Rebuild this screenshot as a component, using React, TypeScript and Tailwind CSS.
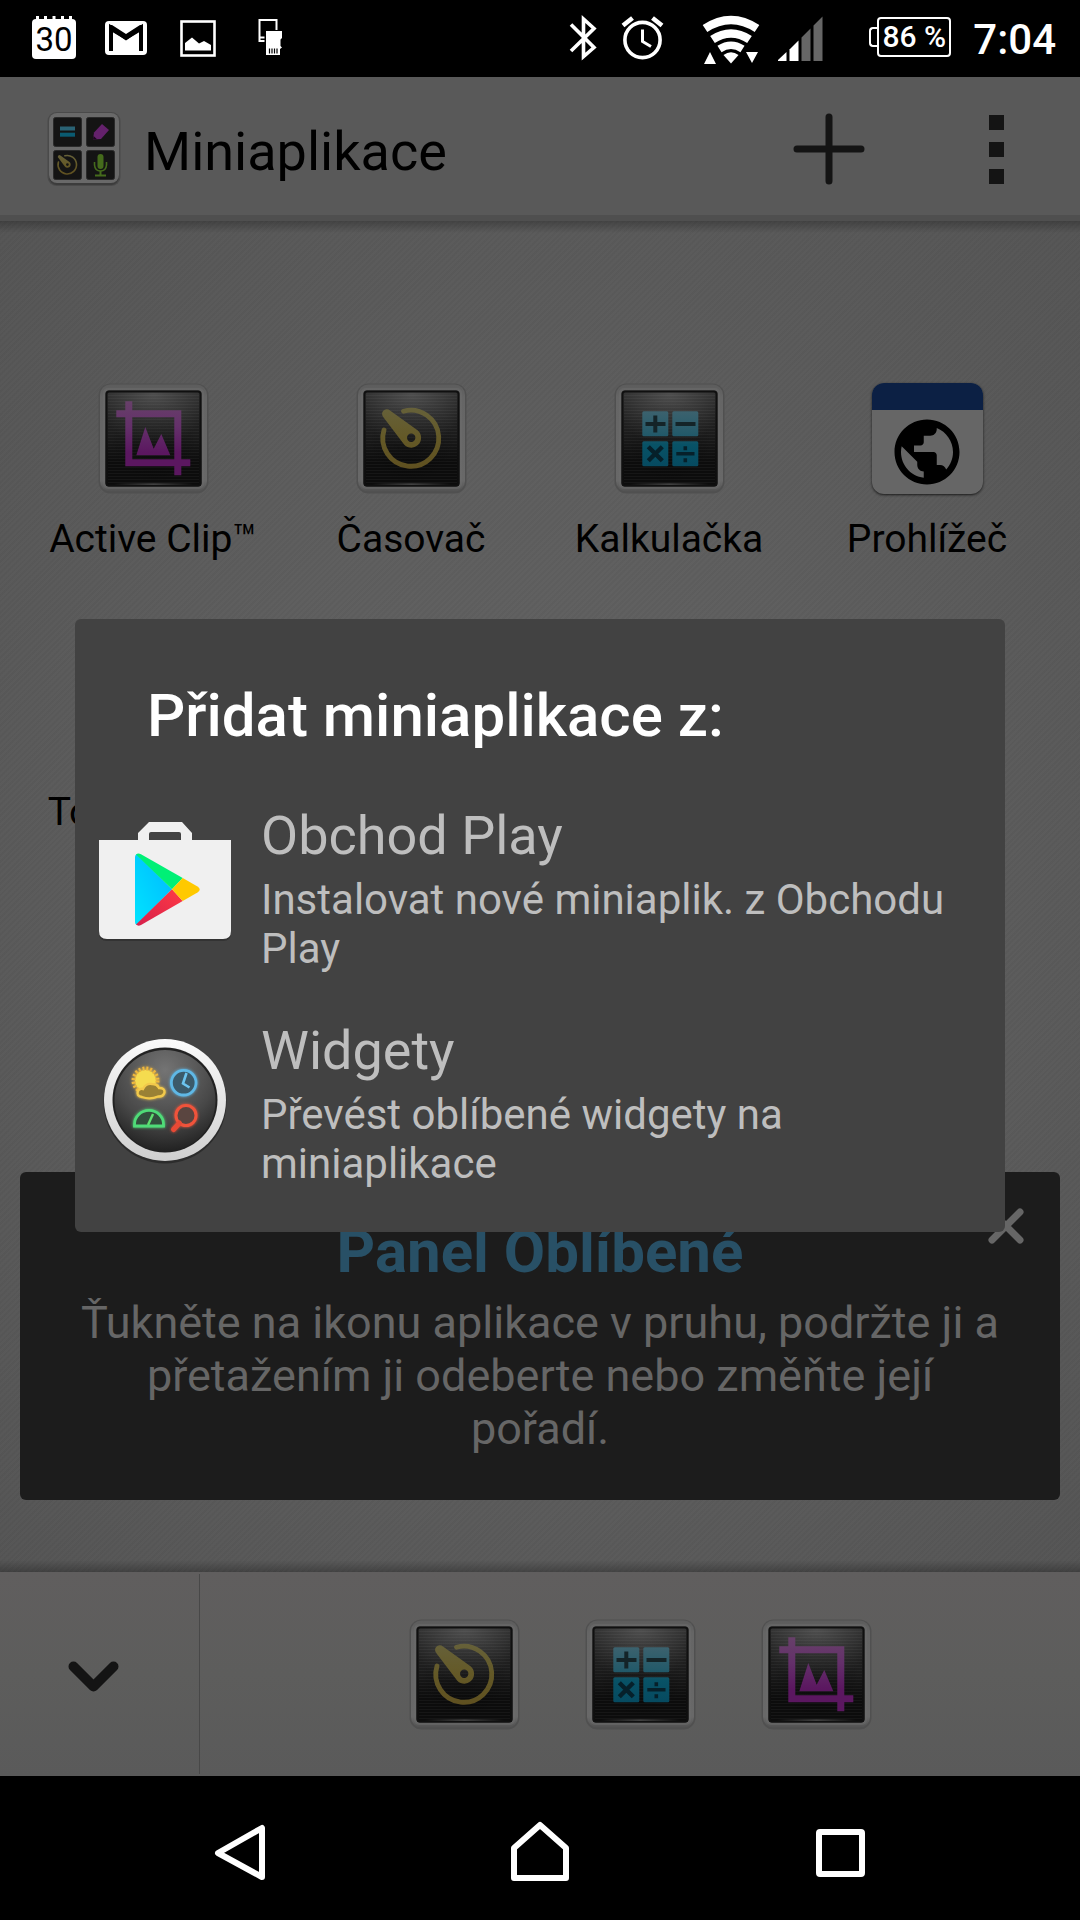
import type { ReactNode } from 'react';
import { MdPublic } from 'react-icons/md';

type AppName = 'clip' | 'timer' | 'calc';

const Gradients = () => (
  <svg className="absolute h-0 w-0" aria-hidden="true">
    <defs>
      <linearGradient id="shell" x1="0" y1="0" x2="0" y2="1">
        <stop offset="0" stopColor="#5c5c5c" />
        <stop offset="0.12" stopColor="#656565" />
        <stop offset="0.9" stopColor="#686868" />
        <stop offset="1" stopColor="#525252" />
      </linearGradient>
      <linearGradient id="glass" x1="0" y1="0" x2="0" y2="1">
        <stop offset="0" stopColor="#2e2e2e" />
        <stop offset="0.45" stopColor="#1c1c1c" />
        <stop offset="0.75" stopColor="#0c0c0c" />
        <stop offset="1" stopColor="#0c0c0c" />
      </linearGradient>
      <radialGradient id="shine" cx="0.5" cy="0" r="0.6">
        <stop offset="0" stopColor="#fff" stopOpacity="0.16" />
        <stop offset="1" stopColor="#fff" stopOpacity="0" />
      </radialGradient>
      <linearGradient id="bottomEdge" x1="0" y1="0" x2="1" y2="0">
        <stop offset="0" stopColor="#555" stopOpacity="0" />
        <stop offset="0.5" stopColor="#555" />
        <stop offset="1" stopColor="#555" stopOpacity="0" />
      </linearGradient>
      <pattern id="lines" width="4" height="3" patternUnits="userSpaceOnUse">
        <path d="M0 0.5H4" stroke="#fff" strokeOpacity="0.04" />
      </pattern>
      <linearGradient id="purple" gradientUnits="userSpaceOnUse" x1="0" y1="18" x2="0" y2="92">
        <stop offset="0" stopColor="#674069" />
        <stop offset="0.35" stopColor="#64306a" />
        <stop offset="0.7" stopColor="#5b1760" />
        <stop offset="1" stopColor="#5b1760" />
      </linearGradient>
      <linearGradient id="yellow" gradientUnits="userSpaceOnUse" x1="0" y1="24" x2="0" y2="86">
        <stop offset="0" stopColor="#66613a" />
        <stop offset="0.5" stopColor="#645927" />
        <stop offset="1" stopColor="#5f5020" />
      </linearGradient>
      <linearGradient id="cyan" gradientUnits="userSpaceOnUse" x1="0" y1="28" x2="0" y2="84">
        <stop offset="0" stopColor="#3c626e" />
        <stop offset="0.45" stopColor="#215969" />
        <stop offset="0.6" stopColor="#085266" />
        <stop offset="1" stopColor="#064a60" />
      </linearGradient>
      <radialGradient id="glow">
        <stop offset="0" stopColor="currentColor" stopOpacity="0.2" />
        <stop offset="1" stopColor="currentColor" stopOpacity="0" />
      </radialGradient>
    </defs>
  </svg>
);

const TimerGlyph = () => (
  <>
    <path d="M47.5 28.2A28 28 0 1 1 28 47" fill="none" stroke="url(#yellow)" strokeWidth="4.8" strokeLinecap="round" />
    <path
      fillRule="evenodd"
      fill="url(#yellow)"
      d="M27.6 34.4A4.6 4.6 0 0 1 34 27.4L61.5 47.3A9.8 9.8 0 1 1 46.8 59.8ZM55.2 50.6a4.2 4.2 0 1 0 0 8.4a4.2 4.2 0 1 0 0-8.4Z"
    />
  </>
);

const ClipGlyph = () => (
  <g fill="url(#purple)">
    <path
      fillRule="evenodd"
      d="M27.3 18.3h7v9h49v49h9v7h-9v9h-7v-9h-49v-49h-9v-7h9ZM34.3 34.3v42h42v-42Z"
    />
    <path d="M38.3 72.3L47.3 44L55.7 65.7L63.3 51L72.3 72.3Z" />
  </g>
);

const CalcGlyph = () => (
  <>
    <g fill="url(#cyan)">
      <rect x="28.3" y="28.3" width="26" height="25" rx="1.5" />
      <rect x="58.3" y="28.3" width="26" height="25" rx="1.5" />
      <rect x="28.3" y="58.3" width="26" height="25" rx="1.5" />
      <rect x="58.3" y="58.3" width="26" height="25" rx="1.5" />
    </g>
    <path d="M31.5 41H51.5M41.3 32.5V49.5M61.5 41H81.5" stroke="#142428" strokeWidth="4" />
    <path d="M34.3 63.8L48.3 77.8M48.3 63.8L34.3 77.8" stroke="#06202a" strokeWidth="4.4" />
    <path d="M62.3 70.8H80.5M71.3 63.3v4M71.3 75.2v4" stroke="#06202a" strokeWidth="3.6" />
  </>
);

const glyphs: Record<AppName, ReactNode> = {
  clip: <ClipGlyph />,
  timer: <TimerGlyph />,
  calc: <CalcGlyph />,
};

const glowColors: Record<AppName, string> = {
  clip: 'text-[#7a1a80]',
  timer: 'text-[#6b6010]',
  calc: 'text-[#107088]',
};

const AppTile = ({ name }: { name: AppName }) => (
  <svg viewBox="0 0 111 111" className={`size-[111px] ${glowColors[name]}`} aria-hidden="true">
    <rect x="0.5" y="0.5" width="110" height="110" rx="12" fill="#505050" />
    <rect x="2" y="1.5" width="107" height="107" rx="10.5" fill="url(#shell)" />
    <rect x="5" y="5" width="101" height="101" rx="5" fill="#6b6b6b" fillOpacity="0.5" />
    <rect x="7.5" y="7.5" width="96" height="96" rx="3.5" fill="url(#glass)" />
    <rect x="10" y="10" width="91" height="91" fill="url(#lines)" />
    <rect x="9" y="9" width="93" height="93" rx="2" fill="url(#shine)" />
    <circle cx="55.5" cy="60" r="44" fill="url(#glow)" />
    <rect x="8.5" y="8.5" width="94" height="94" rx="2.5" fill="none" stroke="#101010" strokeWidth="2" />
    <rect x="16" y="100.5" width="79" height="1.2" fill="url(#bottomEdge)" />
    {glyphs[name]}
  </svg>
);

const BrowserTile = () => (
  <div className="flex size-[111px] flex-col overflow-hidden rounded-xl bg-[#666666] shadow-sm shadow-black/60">
    <div className="h-[27px] bg-[#0c2044]" />
    <div className="flex flex-1 items-center justify-center">
      <MdPublic size={78} className="text-black" />
    </div>
  </div>
);

const SmallAppsIcon = () => (
  <svg viewBox="0 0 74 76" className="h-[76px] w-[74px]" aria-hidden="true">
    <rect x="0.500" y="1" width="73" height="74" rx="9" fill="#4a4a4a" />
    <rect x="2" y="3" width="70" height="71" rx="8" fill="#3c3c3c" />
    <rect x="2" y="2" width="70" height="70" rx="8" fill="#696969" />
    <g transform="translate(1 1)">
      <g fill="#141414" stroke="#2a2a2a">
        <rect x="5.500" y="5.500" width="28" height="29" rx="2" />
        <rect x="38.500" y="5.500" width="28" height="29" rx="2" />
        <rect x="5.500" y="38.500" width="28" height="29" rx="2" />
        <rect x="38.500" y="38.500" width="28" height="29" rx="2" />
      </g>
      <path d="M12 16.500H27" stroke="#2a6375" strokeWidth="4" />
      <path d="M12 22.700H27" stroke="#0a5a70" strokeWidth="4" />
      <path d="M45 27.500L46 20.500L54 12L61 18L53 27Z" fill="#64216c" />
      <path d="M45 27.500L45.600 24L49 27.200Z" fill="#1a081c" />
      <g transform="translate(1.200 34.500) scale(0.330)">
        <TimerGlyph />
      </g>
      <g stroke="#456b1c" fill="none">
        <path d="M52.500 45V54" strokeWidth="6" strokeLinecap="round" />
        <path d="M46.500 50V53Q47 59 52.500 59Q58 59 58.500 53V50" strokeWidth="1.600" />
        <path d="M52.500 59V63M47 63.500H58" strokeWidth="2" />
      </g>
    </g>
  </svg>
);

const StatusBar = () => (
  <div className="flex h-[77px] shrink-0 items-start justify-between bg-black pt-3 text-white">
    <div className="ml-[18px] flex">
      <svg viewBox="0 0 72 52" className="h-[52px] w-[72px]" role="img" aria-label="Kalendář">
        <rect x="14" y="7" width="44" height="40" rx="4" fill="#fff" />
        <path d="M19.500 4v5M27.500 4v5M36 4v5M44.500 4v5M52.500 4v5" stroke="#fff" strokeWidth="3" />
        <text x="36" y="39" textAnchor="middle" fontSize="33" fontFamily="Roboto, sans-serif" fill="#000">30</text>
      </svg>
      <svg viewBox="0 0 72 52" className="h-[52px] w-[72px]" role="img" aria-label="Gmail">
        <rect x="15" y="9" width="42" height="34" rx="4" fill="#fff" />
        <path d="M21 39V15.500L36 26L51 15.500V39" fill="none" stroke="#000" strokeWidth="4" />
        <path d="M19 13H22L36 22L50 13H53V18L36 28L19 18Z" fill="#000" />
      </svg>
      <svg viewBox="0 0 72 52" className="h-[52px] w-[72px]" aria-hidden="true">
        <rect x="19.500" y="9.500" width="33" height="34" fill="none" stroke="#fff" strokeWidth="2.600" />
        <path d="M23 38.500V31L30 25.500L37 31.500L42 29L49 33V38.500Z" fill="#fff" />
      </svg>
      <svg viewBox="0 0 72 52" className="h-[52px] w-[72px]" aria-hidden="true">
        <path d="M30.500 29H25.500V8H42.500V18" fill="none" stroke="#fff" strokeWidth="2" />
        <path d="M26 25.500H30.500" stroke="#fff" strokeWidth="2" />
        <path d="M32 19H48V26L46.500 27.500V34L48 35.500L46 37V43H32Z" fill="#fff" />
        <path d="M35.500 36.500v5M38 36.500v5M40.500 36.500v5M43 36.500v5" stroke="#000" strokeWidth="1.200" />
      </svg>
    </div>
    <div className="mr-6 flex">
      <svg viewBox="0 0 60 52" className="h-[52px] w-[60px]" role="img" aria-label="Bluetooth">
        <path d="M17 12.500L40 35.500L29.500 44.500V7L40 16.500L17 39" fill="none" stroke="#fff" strokeWidth="3.600" />
      </svg>
      <svg viewBox="0 0 60 52" className="h-[52px] w-[60px]" role="img" aria-label="Budík">
        <circle cx="28.500" cy="28" r="17.600" fill="none" stroke="#fff" strokeWidth="3.600" />
        <path d="M28.500 17.500V29.500L37 34.500" fill="none" stroke="#fff" strokeWidth="3" />
        <path d="M9 13.500L18.500 6M48 13.500L38.500 6" stroke="#fff" strokeWidth="4.600" />
      </svg>
      <svg viewBox="0 0 60 52" className="ml-7 h-[52px] w-[60px]" role="img" aria-label="Wi-Fi">
        <g fill="none" stroke="#fff" strokeWidth="8.500">
          <path d="M3 16.500Q29 -0.500 55 16.500" />
          <path d="M10.500 27.500Q29 15.500 47.500 27.500" />
          <path d="M17.500 37Q29 29.500 40.500 37" strokeWidth="7.500" />
        </g>
        <path d="M21.500 43Q29 37.500 36.500 43L29 51.500Z" fill="#fff" />
        <path d="M2 52L8 40L14 52ZM44 40H56L50 51Z" fill="#fff" />
      </svg>
      <svg viewBox="0 0 46 52" className="ml-4 h-[52px] w-[46px]" role="img" aria-label="Signál">
        <path d="M-1 49L8.500 40V49Z" fill="#fff" />
        <path d="M11.500 49V37.500L20.500 28.500V49Z" fill="#fff" />
        <path d="M23.500 49V25.500L32.500 16.500V49ZM35.500 49V13.500L44.500 4.500V49Z" fill="#666" />
      </svg>
      <div className="ml-[45px] flex h-[50px] items-center">
        <div className="h-5 w-2 rounded-l-sm border-2 border-r-0 border-white" />
        <div className="flex h-10 w-[74px] items-center justify-center rounded-sm border-2 border-white text-[30px] leading-none font-medium whitespace-nowrap">
          86&nbsp;%
        </div>
      </div>
      <div className="ml-[22px] h-[52px] text-[42px] leading-[56px] font-medium">7:04</div>
    </div>
  </div>
);

const Header = () => (
  <header className="flex h-36 shrink-0 items-center border-b-[6px] border-[#4f4f4f] bg-[#595959] pt-[6px] pl-[47px]">
    <SmallAppsIcon />
    <h1 className="ml-[23px] flex-1 pt-[5px] text-[54px] leading-[64px] text-black">Miniaplikace</h1>
    <button type="button" aria-label="Přidat" className="flex h-24 w-[168px] items-center justify-center">
      <svg viewBox="0 0 72 72" className="size-[72px]" aria-hidden="true">
        <path d="M36 4V68M4 36H68" stroke="#141414" strokeWidth="7" strokeLinecap="round" />
      </svg>
    </button>
    <button type="button" aria-label="Další možnosti" className="flex h-24 w-[167px] flex-col items-center justify-center gap-3">
      <span className="size-[15px] bg-[#141414]" />
      <span className="size-[15px] bg-[#141414]" />
      <span className="size-[15px] bg-[#141414]" />
    </button>
  </header>
);

const GridItem = ({ label, children }: { label: string; children: ReactNode }) => (
  <button type="button" className="flex flex-col items-center gap-[22px]">
    {children}
    <span className="text-[39px] leading-[46px] whitespace-nowrap text-black">{label}</span>
  </button>
);

const FavoritesPanel = () => (
  <section className="relative mx-5 mt-auto mb-[72px] rounded-md bg-[#1c1c1c] px-[60px] pt-[45px] pb-[45px] text-center">
    <h2 className="text-[60px] leading-[70px] font-bold text-[#285066]">Panel Oblíbené</h2>
    <p className="mt-[9px] text-[45px] leading-[53px] text-[#666666]">
      Ťukněte na ikonu aplikace v pruhu, podržte ji a přetažením ji odeberte nebo změňte její pořadí.
    </p>
    <button type="button" aria-label="Zavřít" className="absolute top-[35px] right-[35px]">
      <svg viewBox="0 0 38 38" className="size-[38px]" aria-hidden="true">
        <path d="M5 5L33 33M33 5L5 33" stroke="#666" strokeWidth="7" strokeLinecap="round" />
      </svg>
    </button>
  </section>
);

const Dock = () => (
  <footer className="flex h-[204px] shrink-0 bg-linear-to-b from-[#605e5e] via-[#5d5d5c] to-[#5a5a5a]">
    <div className="my-0.5 flex w-[200px] items-center border-r border-[#484848] pt-1 pl-[67px]">
      <button type="button" aria-label="Skrýt">
        <svg viewBox="0 0 53 33" className="h-[33px] w-[53px]" aria-hidden="true">
          <path d="M6.500 6.500L26.500 26.500L46.500 6.500" fill="none" stroke="#141414" strokeWidth="10" strokeLinecap="round" strokeLinejoin="round" />
        </svg>
      </button>
    </div>
    <div className="flex flex-1 items-center justify-center gap-[65px]">
      <button type="button" aria-label="Časovač"><AppTile name="timer" /></button>
      <button type="button" aria-label="Kalkulačka"><AppTile name="calc" /></button>
      <button type="button" aria-label="Active Clip"><AppTile name="clip" /></button>
    </div>
  </footer>
);

const PlayStoreIcon = () => (
  <svg viewBox="0 0 144 144" className="size-36 shrink-0" aria-hidden="true">
    <defs>
      <linearGradient id="playBlue" x1="1" y1="0" x2="0" y2="1">
        <stop offset="0" stopColor="#00b8ff" />
        <stop offset="1" stopColor="#00e4ff" />
      </linearGradient>
      <linearGradient id="playRed" x1="1" y1="0" x2="0" y2="1">
        <stop offset="0" stopColor="#ff3a44" />
        <stop offset="1" stopColor="#d6204c" />
      </linearGradient>
    </defs>
    <path d="M6 26H138V116Q138 124 130 124H14Q6 124 6 116Z" fill="#333" />
    <path
      fillRule="evenodd"
      fill="#f0f0f0"
      d="M6 23H45V16L56 5H89L99 16V23H138V114Q138 122 130 122H14Q6 122 6 114ZM58 15Q56 15 56 17V23H88V17Q88 15 86 15Z"
    />
    <g transform="translate(0 -1)">
      <path d="M42 41Q42 39.500 43.500 38L79 73.300L43.500 109Q42 108 42 106Z" fill="url(#playBlue)" />
      <path d="M43 38.500Q45 36.500 48 38.200L89.700 62L79 73.300Z" fill="#00f076" />
      <path d="M43 108.500Q45 110.500 48 109L89.700 85L79 73.300Z" fill="url(#playRed)" />
      <path d="M89.700 62L104.500 70.500Q109 73.300 104.500 76.500L89.700 85L79 73.300Z" fill="#ffc900" />
    </g>
  </svg>
);

const WidgetsIcon = () => (
  <svg viewBox="0 0 144 144" className="size-36 shrink-0" aria-hidden="true">
    <defs>
      <linearGradient id="ring" x1="0" y1="0" x2="0" y2="1">
        <stop offset="0" stopColor="#fafafa" />
        <stop offset="1" stopColor="#cfcfcf" />
      </linearGradient>
      <radialGradient id="disc" cx="0.5" cy="0.2" r="0.85">
        <stop offset="0" stopColor="#747474" />
        <stop offset="0.6" stopColor="#484848" />
        <stop offset="1" stopColor="#1c1c1c" />
      </radialGradient>
      <filter id="neon" x="-20%" y="-20%" width="140%" height="140%">
        <feGaussianBlur stdDeviation="1.8" result="halo" />
        <feMerge>
          <feMergeNode in="halo" />
          <feMergeNode in="SourceGraphic" />
        </feMerge>
      </filter>
    </defs>
    <circle cx="72" cy="70" r="61.500" fill="#2c2c2c" />
    <circle cx="72" cy="68" r="61" fill="url(#ring)" />
    <circle cx="72" cy="68" r="52.500" fill="#222" />
    <circle cx="72" cy="68.500" r="50.500" fill="url(#disc)" />
    <g filter="url(#neon)" transform="translate(0 -1)">
      <circle cx="52.500" cy="49.500" r="10.500" fill="#f5dc50" />
      <circle cx="52.500" cy="49.500" r="12" fill="none" stroke="#f0b83c" strokeWidth="4" strokeDasharray="1.900 1.900" />
      <path
        d="M49 66Q43 65 45 60Q46.500 57 50 58Q53 52 59 53Q64 53 66 57Q72 57 71.500 61.500Q70 66 65 65.500Q57 69 49 66Z"
        fill="#9a8134"
        stroke="#f2c94c"
        strokeWidth="2.400"
      />
      <circle cx="90.700" cy="51.700" r="12.300" fill="#3a5a6a" stroke="#5fb8e6" strokeWidth="2.800" />
      <path d="M93.500 42L90 52.500L96.500 56.500" fill="none" stroke="#6cc4f0" strokeWidth="2.600" />
      <path d="M41.500 95V93.500A14.400 14 0 0 1 70.500 93.500V95Z" fill="#33503c" stroke="#4fdc78" strokeWidth="2.800" />
      <path d="M55 94L60 83" stroke="#5fe070" strokeWidth="2.400" />
      <circle cx="93" cy="84.500" r="10" fill="#5a4440" stroke="#f0533a" strokeWidth="3" />
      <path d="M86.500 92L80.500 98.500" stroke="#e84a34" strokeWidth="5" strokeLinecap="round" />
    </g>
  </svg>
);

const sources = [
  { title: 'Obchod Play', text: 'Instalovat nové miniaplik. z Obchodu Play', icon: <PlayStoreIcon /> },
  { title: 'Widgety', text: 'Převést oblíbené widgety na miniaplikace', icon: <WidgetsIcon /> },
];

const AddDialog = () => (
  <div className="absolute inset-0 flex items-center justify-center px-[75px] pb-0.5">
    <div role="dialog" aria-labelledby="add-title" className="w-full rounded-md bg-[#424242] pt-[62px] pb-[21px]">
      <h2 id="add-title" className="mb-[30px] pl-[72px] text-[60px] leading-[70px] font-medium text-white">
        Přidat miniaplikace z:
      </h2>
      {sources.map((source) => (
        <button key={source.title} type="button" className="flex w-full items-center gap-6 py-[23px] pr-6 pl-[18px] text-left">
          {source.icon}
          <span className="flex flex-1 flex-col gap-2 text-[#bebebe]">
            <span className="text-[54px] leading-[63px]">{source.title}</span>
            <span className="text-[42px] leading-[49px]">{source.text}</span>
          </span>
        </button>
      ))}
    </div>
  </div>
);

const NavBar = () => (
  <nav className="flex h-36 shrink-0 items-center justify-center bg-black px-[90px]">
    <button type="button" aria-label="Zpět" className="flex flex-1 justify-center">
      <svg viewBox="0 0 60 72" className="h-[72px] w-[60px]" aria-hidden="true">
        <path d="M8 41L52 16V65Z" fill="none" stroke="#fff" strokeWidth="6" strokeLinejoin="round" />
      </svg>
    </button>
    <button type="button" aria-label="Domů" className="flex flex-1 justify-center">
      <svg viewBox="0 0 60 72" className="h-[72px] w-[60px]" aria-hidden="true">
        <path d="M4 66V36L30 13L56 36V66Z" fill="none" stroke="#fff" strokeWidth="6" strokeLinejoin="round" />
      </svg>
    </button>
    <button type="button" aria-label="Přehled" className="flex flex-1 justify-center">
      <svg viewBox="0 0 60 72" className="h-[72px] w-[60px]" aria-hidden="true">
        <rect x="9" y="20" width="43" height="42" rx="1" fill="none" stroke="#fff" strokeWidth="6" />
      </svg>
    </button>
  </nav>
);

export default function App() {
  return (
    <div className="flex min-h-screen flex-col bg-black font-[Roboto,sans-serif]">
      <Gradients />
      <StatusBar />
      <div className="relative flex flex-1 flex-col">
        <Header />
        <main className="relative flex flex-1 flex-col bg-[repeating-linear-gradient(135deg,rgba(0,0,0,0.03)_0px,rgba(0,0,0,0.03)_2px,transparent_2px,transparent_4px),radial-gradient(ellipse_at_center,#636363_0%,#5f5f5f_45%,#565656_100%)]">
          <div className="absolute inset-x-0 top-0 h-3 bg-linear-to-b from-black/25 to-transparent" />
          <div className="absolute inset-x-0 bottom-0 h-3 bg-linear-to-t from-black/25 to-transparent" />
          <div className="grid grid-cols-4 gap-y-[94px] px-6 pt-[162px]">
            <GridItem label="Active Clip™"><AppTile name="clip" /></GridItem>
            <GridItem label="Časovač"><AppTile name="timer" /></GridItem>
            <GridItem label="Kalkulačka"><AppTile name="calc" /></GridItem>
            <GridItem label="Prohlížeč"><BrowserTile /></GridItem>
            <GridItem label="Touch block"><AppTile name="clip" /></GridItem>
          </div>
          <FavoritesPanel />
        </main>
        <Dock />
        <AddDialog />
      </div>
      <NavBar />
    </div>
  );
}
